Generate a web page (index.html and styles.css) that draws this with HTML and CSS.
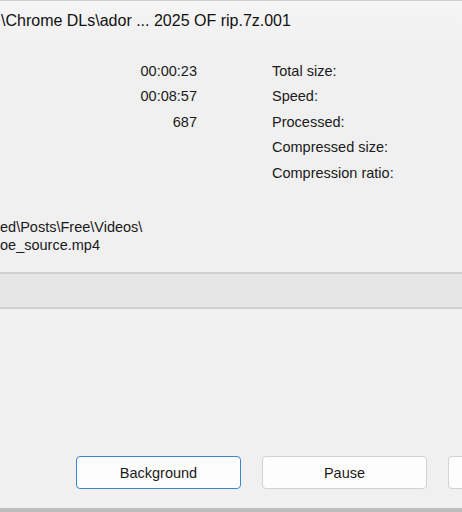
FILE: index.html
```html
<!DOCTYPE html>
<html>
<head>
<meta charset="utf-8">
<link rel="stylesheet" href="styles.css">
</head>
<body>
<div class="dialog">
  <div class="title-bar">
    <span class="title">\Chrome DLs\ador ... 2025 OF rip.7z.001</span>
  </div>
  <div class="stats">
    <span class="value">00:00:23</span><span class="label">Total size:</span>
    <span class="value">00:08:57</span><span class="label">Speed:</span>
    <span class="value">687</span><span class="label">Processed:</span>
    <span class="value"></span><span class="label">Compressed size:</span>
    <span class="value"></span><span class="label">Compression ratio:</span>
  </div>
  <div class="path">
    <div>ed\Posts\Free\Videos\</div>
    <div>oe_source.mp4</div>
  </div>
  <div class="progress"></div>
  <div class="actions">
    <button class="btn btn-default">Background</button>
    <button class="btn">Pause</button>
    <button class="btn" aria-label="Cancel"></button>
  </div>
  <div class="bottom-edge"></div>
</div>
</body>
</html>
```
FILE: styles.css
```css
html, body {
  margin: 0;
  padding: 0;
}

body {
  width: 462px;
  height: 512px;
  overflow: hidden;
  background: #f0f0f0;
  font-family: "Liberation Sans", Arial, sans-serif;
  color: #1a1a1a;
}

.dialog {
  display: flex;
  flex-direction: column;
  height: 512px;
  border-top: 1px solid #cfcfcf;
  box-sizing: border-box;
}

.title-bar {
  height: 42px;
  display: flex;
  align-items: center;
  background: linear-gradient(#f6f6f6, #f3f3f3 40%, #f1f1f1);
  padding-left: 1px;
  padding-bottom: 2px;
  box-sizing: border-box;
}

.title {
  font-size: 16px;
  white-space: nowrap;
  color: #111;
}

.stats {
  display: grid;
  grid-template-columns: 197px auto;
  column-gap: 75px;
  grid-auto-rows: 25.5px;
  align-items: center;
  padding-top: 15px;
  font-size: 14.5px;
}

.value {
  text-align: right;
}

.path {
  margin-top: 32px;
  font-size: 14.5px;
  line-height: 18px;
  white-space: nowrap;
}

.progress {
  margin-top: 18px;
  height: 37px;
  background: #e6e6e6;
  border-top: 2px solid #d0d0d0;
  border-bottom: 2px solid #d0d0d0;
  box-sizing: border-box;
}

.actions {
  display: flex;
  gap: 21px;
  margin-top: auto;
  margin-bottom: 19px;
  padding-left: 76px;
  white-space: nowrap;
}

.btn {
  flex: 0 0 165px;
  height: 33px;
  border: 1px solid #d2d2d2;
  border-radius: 4px;
  background: #fdfdfd;
  font-family: "Liberation Sans", Arial, sans-serif;
  font-size: 14.5px;
  color: #1a1a1a;
  padding: 0;
}

.btn-default {
  border: 1.5px solid #3c86d0;
}

.bottom-edge {
  height: 4px;
  background: #bdbdbd;
}
```
